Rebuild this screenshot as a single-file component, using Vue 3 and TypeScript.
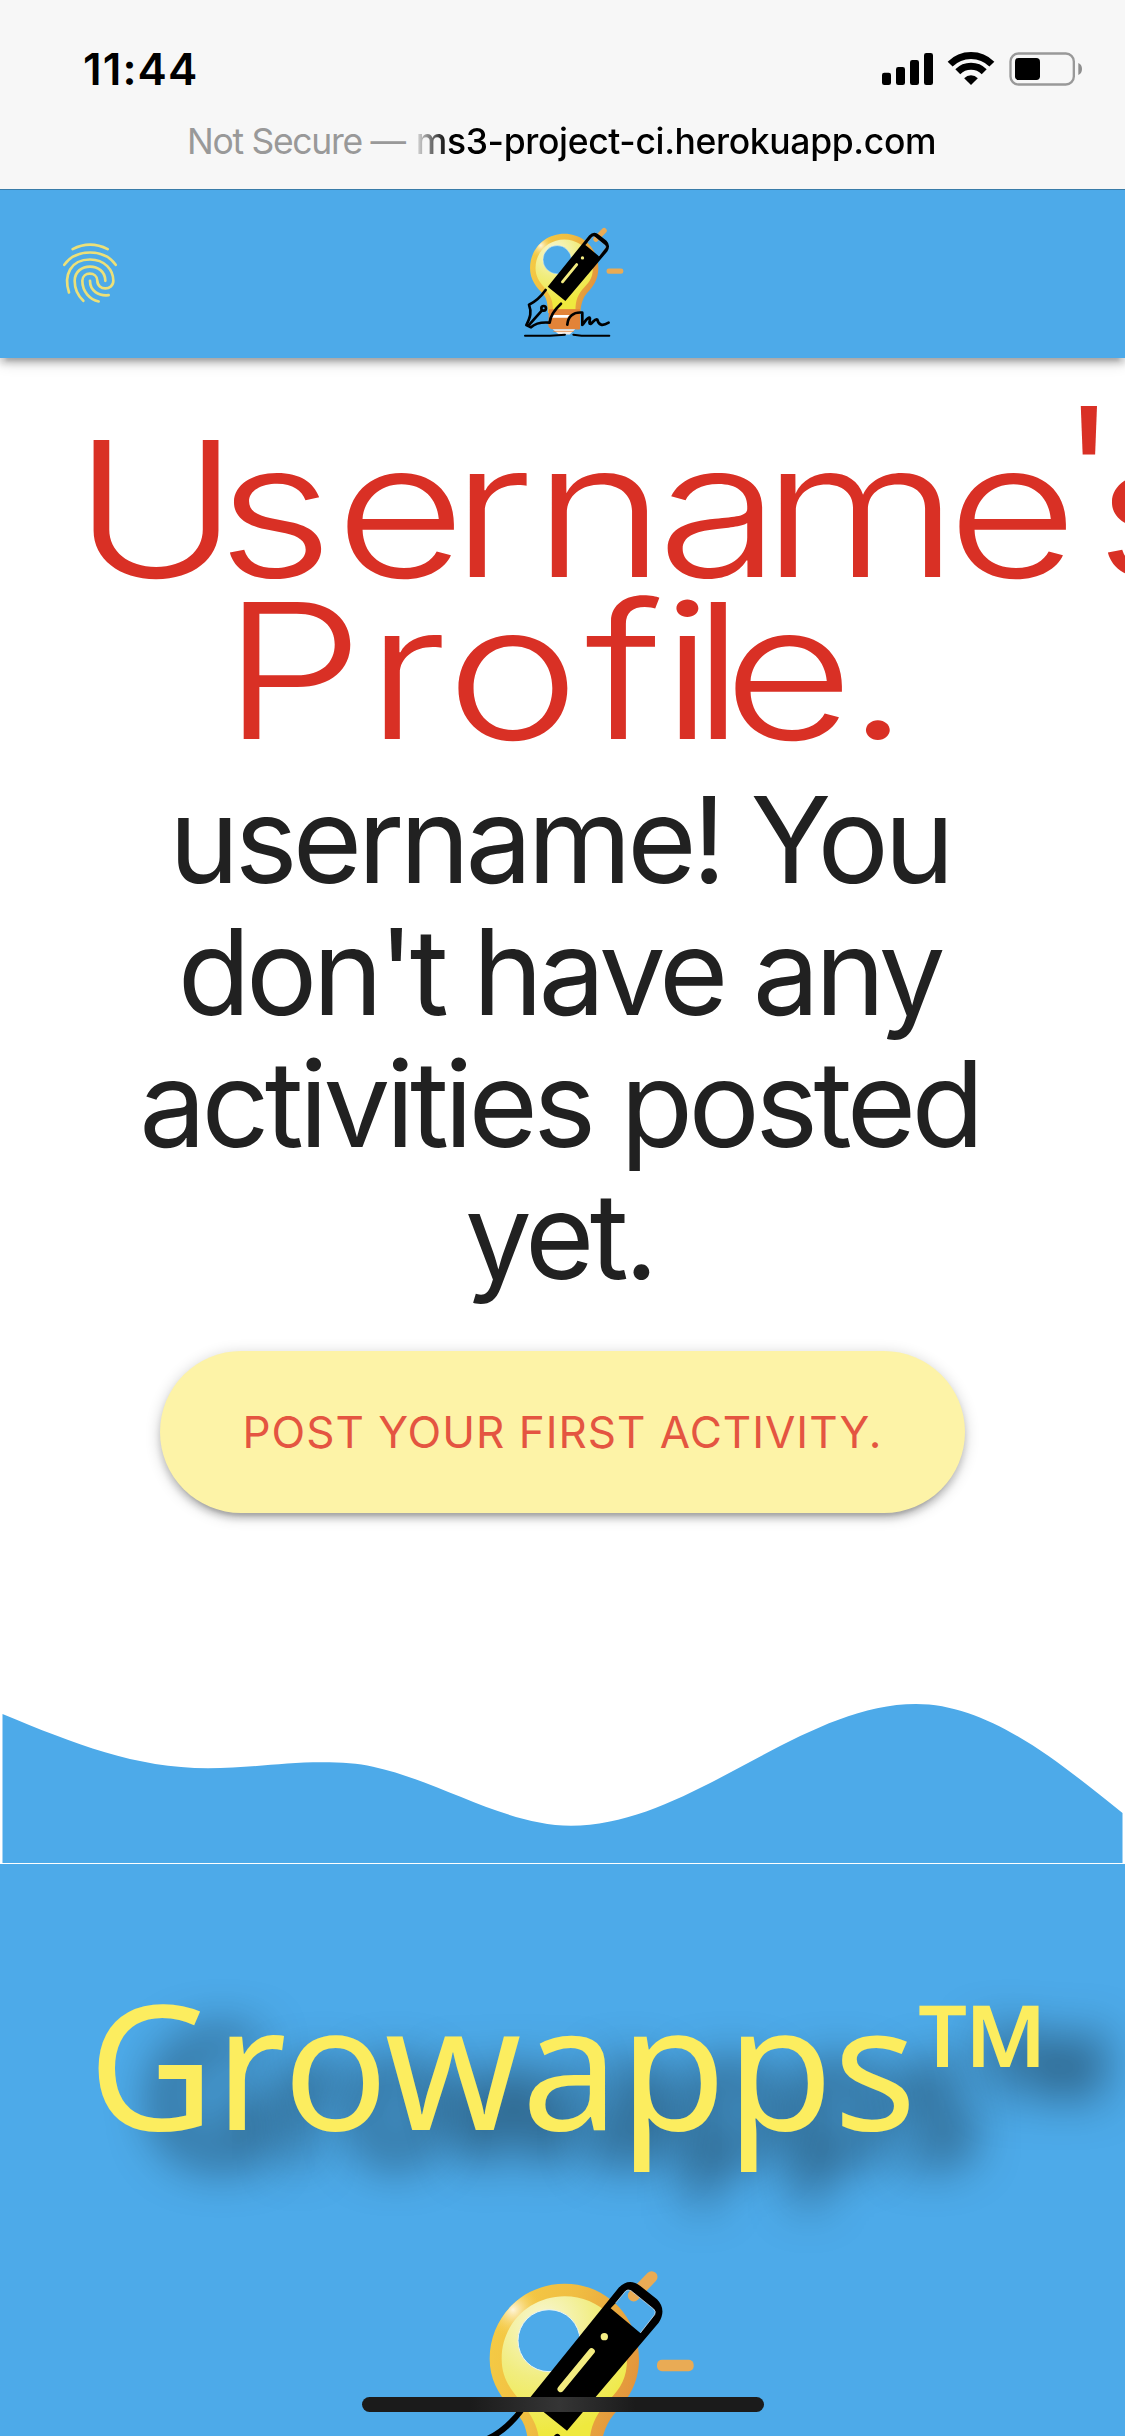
<script setup lang="ts">
const signalBars: { x: number; y: number }[] = [
  { x: 66, y: 128 },
  { x: 108, y: 111 },
  { x: 150, y: 90 },
  { x: 192, y: 69 },
]

const headingLines: string[] = ['username! You', "don't have any", 'activities posted', 'yet.']

// Pen start of every letter in the hand-set title, which is stretched sideways
const stretch = 1.2
const penStarts = (xs: number[]): string => xs.map((x) => (x / stretch).toFixed(1)).join(' ')
const firstLineX = penStarts([73, 217, 335, 451, 533, 657, 762, 947, 1056, 1095])
const secondLineX = penStarts([222, 366, 446, 585, 661, 692, 723, 846])
</script>

<template>
  <div class="screen">
    <svg class="defs" width="0" height="0" aria-hidden="true">
      <defs>
        <linearGradient id="rim" x1="0" y1="0.2" x2="1" y2="0.6">
          <stop offset="0" stop-color="#f5cc45" />
          <stop offset="0.45" stop-color="#f0bd42" />
          <stop offset="1" stop-color="#e2933c" />
        </linearGradient>
        <radialGradient id="shine" gradientUnits="userSpaceOnUse" cx="520" cy="208" r="85">
          <stop offset="0" stop-color="#fff6dc" />
          <stop offset="1" stop-color="#f5cc45" stop-opacity="0" />
        </radialGradient>
        <radialGradient id="glass" gradientUnits="userSpaceOnUse" cx="610" cy="250" r="330">
          <stop offset="0" stop-color="#f8f7d8" />
          <stop offset="0.5" stop-color="#f1ed80" />
          <stop offset="1" stop-color="#efe93e" />
        </radialGradient>
        <symbol id="logo" viewBox="253 -25 984 918">
          <path d="M882 166L936 110" stroke="#e9ab55" stroke-width="35" stroke-linecap="round" />
          <rect x="952" y="358" width="110" height="35" rx="15" fill="#e9ab55" />
          <path
            d="M675 130C800 130 898 230 898 355C898 432 862 480 824 520C797 552 785 590 780 650L568 650C565 590 562 560 540 530C490 480 450 430 450 355C450 230 550 130 675 130Z"
            fill="url(#rim)"
          />
          <path
            d="M675 130C800 130 898 230 898 355L450 355C450 230 550 130 675 130Z"
            fill="url(#shine)"
          />
          <path
            d="M675 168C780 168 862 250 862 355C862 412 845 440 808 480C760 530 750 570 748 626L600 626C598 570 590 545 545 485C510 445 486 410 486 355C486 250 570 168 675 168Z"
            fill="url(#glass)"
          />
          <circle cx="628" cy="301" r="93" fill="#4daae9" stroke="#e9f4f4" stroke-width="3" />
          <path d="M574 626H778V757Q760 762 748 757H590Q565 745 570 715Z" fill="#e28338" />
          <path d="M590 664H710L695 681H590Z" fill="#fff" />
          <path d="M598 757H746L710 792H640Z" fill="#f4ece8" />
          <path d="M602 771H738" stroke="#e28338" stroke-width="5" />
          <path
            fill-rule="evenodd"
            d="M566 478L837 142Q868 110 902 137L952 177Q982 208 957 247L682 571ZM828 188L813 204L902 278L945 223Q950 213 942 206L874 151Q864 146 858 152Z"
          />
          <path d="M828 188L858 152Q864 146 874 151L942 206Q950 213 945 223L902 278" fill="none" stroke="#eaf5fc" stroke-width="2" />
          <circle cx="794" cy="289" r="11" fill="#f5ee84" />
          <path d="M756 333L663 446" stroke="#f3ec80" stroke-width="19" stroke-linecap="round" />
          <g
            transform="translate(253 -25) scale(2.186)"
            fill="none"
            stroke="#000"
            stroke-width="8"
            stroke-linecap="round"
            stroke-linejoin="round"
          >
            <path d="M137 240C122 261 107 275 87 284C95 306 92 320 79 345L93 352C108 338 126 336 149 338C151 316 168 295 183 281" />
            <circle cx="131" cy="295" r="7" />
            <path d="M126 301L86 346" />
            <path d="M202 344C204 320 220 305 247 308L247 345C256 334 262 322 269 323C274 326 263 341 272 342C280 336 286 325 292 329C296 346 307 349 326 338" />
            <path d="M75 377H150L195 374M220 374L245 377H328" stroke-width="6" />
          </g>
        </symbol>
      </defs>
    </svg>

    <header class="browser">
      <div class="status">
        <span class="time">11:44</span>
        <svg class="indicators" viewBox="60 60 612 114">
          <rect v-for="bar in signalBars" :key="bar.x" :x="bar.x" :y="bar.y" width="27" :height="165 - bar.y" rx="7" />
          <path d="M270.4 102.4A88.5 88.5 0 0 1 395.6 102.4M293.4 125.4A56 56 0 0 1 372.6 125.4" fill="none" stroke="#000" stroke-width="21" />
          <path d="M333 165L312.5 144.5A29 29 0 0 1 353.5 144.5Z" />
          <rect x="451.5" y="70.5" width="190" height="93" rx="24" fill="none" stroke="#999" stroke-width="7" />
          <rect x="465" y="84" width="75" height="66" rx="11" />
          <path d="M655 99Q666 104 666 117T655 135Z" fill="#8e8e8e" />
        </svg>
      </div>
      <div class="address">
        <span class="insecure">Not Secure —</span>
        <span class="host">ms3-project-ci.herokuapp.com</span>
      </div>
    </header>

    <nav class="nav">
      <svg class="finger" viewBox="60 60 180 200">
        <path d="M98 87Q150 60 203 87" />
        <path d="M73 134C92 107 118 97 150 97S208 107 227 134" />
        <path d="M87 217C70 165 92 118 150 118C195 118 220 150 220 182C220 212 172 212 172 182C172 153 127 153 127 182C127 215 150 238 176 244" />
        <path d="M130 242C115 228 104 208 104 182C104 125 196 125 196 182" />
        <path d="M150 182C150 212 175 228 206 225" />
      </svg>
      <svg class="nav-logo"><use href="#logo" /></svg>
    </nav>

    <main class="main">
      <svg class="title" viewBox="0 0 1125 420" role="heading">
        <g :transform="`scale(${stretch} 1)`">
          <text :x="firstLineX" y="219" dy="0 0 0 0 0 0 0 0 -34 34">Username's</text>
          <text :x="secondLineX" y="381">Profile.</text>
        </g>
      </svg>
      <h2 class="message">
        <span v-for="line in headingLines" :key="line" class="line">{{ line }}</span>
      </h2>
      <button class="post" type="button">POST YOUR FIRST ACTIVITY.</button>
    </main>

    <svg class="wave" viewBox="0 1693 1125 170">
      <path d="M2.5 1714C75 1744 135 1768 208 1768.3C250 1768.3 282 1762.3 322 1762.3C342 1762.3 358 1763.5 373 1766.7C440 1781 505 1825.7 571 1825.7C690 1825.7 800 1704 916 1704C990 1704 1060 1763 1122.5 1813V1863H2.5Z" />
    </svg>

    <footer class="footer">
      <div class="brand">Growapps™</div>
      <svg class="footer-logo"><use href="#logo" /></svg>
    </footer>
    <div class="home"></div>
  </div>
</template>

<style>
body {
  margin: 0;
  background: #fff;
}
</style>

<style scoped>
.screen {
  position: relative;
  display: flex;
  flex-direction: column;
  width: 1125px;
  height: 2436px;
  overflow: hidden;
  background: #fff;
  font-family: Inter, "Liberation Sans", sans-serif;
}
.defs {
  position: absolute;
}
.browser {
  position: relative;
  z-index: 1;
  box-sizing: border-box;
  flex: none;
  height: 190px;
  padding-top: 42px;
  background: #f7f7f7;
  border-bottom: 1px solid #397ca9;
}
.status {
  display: flex;
  justify-content: space-between;
  align-items: flex-start;
  height: 76px;
  padding: 0 41px 0 83px;
}
.time {
  font-size: 44px;
  line-height: 54px;
  font-weight: 600;
  letter-spacing: 1.1px;
}
.indicators {
  width: 204px;
  height: 38px;
  margin-top: 8px;
}
.address {
  display: flex;
  gap: 11px;
  padding-left: 187px;
  font-size: 35.5px;
  line-height: 48px;
  white-space: nowrap;
}
.insecure {
  color: #999;
  letter-spacing: -1.3px;
}
.host {
  font-weight: 500;
  letter-spacing: -0.35px;
  color: transparent;
  background: linear-gradient(90deg, #ddd 0, #000 32px);
  background-clip: text;
}
.nav {
  position: relative;
  box-sizing: border-box;
  flex: none;
  display: flex;
  align-items: flex-start;
  height: 168px;
  padding: 20px 0 0 60px;
  background: #4daae9;
  box-shadow: 0 6px 6px 0 rgba(0, 0, 0, 0.14), 0 9px 3px -6px rgba(0, 0, 0, 0.12), 0 3px 15px 0 rgba(0, 0, 0, 0.2);
}
.finger {
  width: 60px;
  height: 67px;
  margin-top: 30px;
  fill: none;
  stroke: #ece079;
  stroke-width: 8;
  stroke-linecap: round;
}
.nav-logo {
  width: 150px;
  height: 140px;
  margin-left: 380px;
}
.main {
  flex: none;
  display: flex;
  flex-direction: column;
  align-items: center;
  height: 1335px;
}
.title {
  flex: none;
  width: 1125px;
  height: 420px;
  font-size: 188px;
  font-weight: 350;
  fill: #d93025;
}
.message {
  display: flex;
  flex-direction: column;
  align-items: center;
  margin: -4px 0 0;
  padding-right: 6px;
  color: #212121;
  font-size: 119px;
  line-height: 132px;
  font-weight: 400;
  letter-spacing: -4.6px;
  white-space: nowrap;
}
.post {
  width: 805px;
  height: 162px;
  margin-top: 49px;
  padding: 0;
  border: 0;
  border-radius: 81px;
  background: #fdf3a7;
  color: #e45541;
  font-family: inherit;
  font-size: 44px;
  line-height: 160px;
  letter-spacing: 1px;
  white-space: nowrap;
  box-shadow: 0 6px 6px 0 rgba(0, 0, 0, 0.14), 0 9px 3px -6px rgba(0, 0, 0, 0.12), 0 3px 15px 0 rgba(0, 0, 0, 0.2);
}
.wave {
  flex: none;
  display: block;
  width: 1125px;
  height: 170px;
  fill: #4daae9;
}
.footer {
  flex: none;
  height: 572px;
  margin-top: 1px;
  overflow: hidden;
  background: #4daae9;
}
.brand {
  height: 237px;
  margin: 80px 0 0 88px;
  color: #fced5f;
  font-family: "Noto Sans", "Open Sans", sans-serif;
  font-size: 174px;
  line-height: 237px;
  white-space: nowrap;
  text-shadow: 60px 30px 48px rgba(0, 0, 0, 0.8);
}
.footer-logo {
  display: block;
  width: 328px;
  height: 306px;
  margin: 51px 0 0 424px;
}
.home {
  position: absolute;
  left: 362px;
  top: 2397px;
  width: 402px;
  height: 15px;
  border-radius: 8px;
  background: linear-gradient(90deg, #1b1b1b 27%, #353535 49%, #1b1b1b 68%);
}
</style>
